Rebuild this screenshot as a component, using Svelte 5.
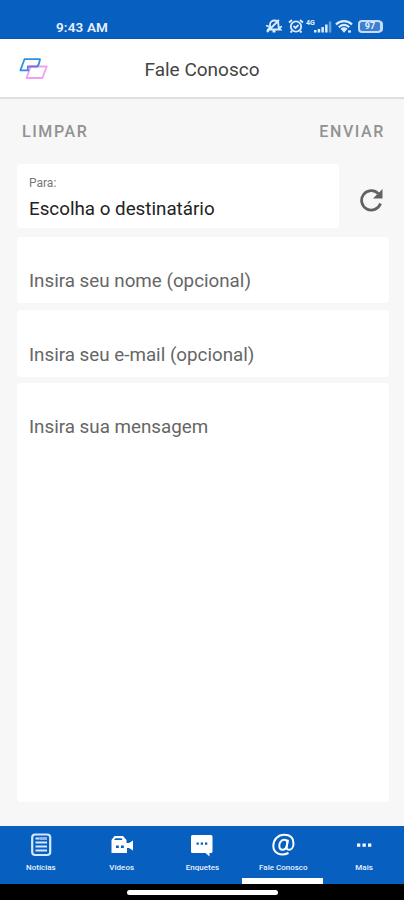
<script lang="ts">
	interface Tab {
		id: string;
		label: string;
	}

	const tabs: Tab[] = [
		{ id: 'news', label: 'Notícias' },
		{ id: 'videos', label: 'Vídeos' },
		{ id: 'polls', label: 'Enquetes' },
		{ id: 'contact', label: 'Fale Conosco' },
		{ id: 'more', label: 'Mais' }
	];

	let activeTab = $state('contact');
	let name = $state('');
	let email = $state('');
	let message = $state('');

	function clearForm() {
		name = '';
		email = '';
		message = '';
	}
</script>

<div class="screen">
	<div class="status-bar">
		<span class="clock">9:43 AM</span>
		<div class="status-icons">
			<svg width="18" height="16" viewBox="0 0 18 16" fill="none" stroke="#dcecff" stroke-width="1.8">
				<path d="M3 11.500 5 9V6.500C5 4 7 2.500 9.500 2.500S13.500 4.500 13.500 7v2l2 2.500zM7.500 13.500h3M2 14 14 2M13 10l4-1.500M1 7.500l3 1" />
			</svg>
			<svg width="16" height="16" viewBox="0 0 16 16" fill="none" stroke="#dcecff" stroke-width="1.8">
				<circle cx="8" cy="8.500" r="5.200" />
				<path d="M1 4.500 4 2M15 4.500 12 2M5.500 8l2 2 3-3M4 13l-1.500 1.500M12 13l1.500 1.500" />
			</svg>
			<div class="signal">
				<span>4G</span>
				<svg width="23" height="16" viewBox="0 0 23 16" fill="#dcecff">
					<path d="M4 12h2.500v2.500H4zM7.700 11h2.500v3.500H7.700zM11.400 9h2.500v5.500h-2.500zM15.100 6.500h2.500v8h-2.500z" />
					<path d="M18.800 3.500h2.500v11h-2.500z" opacity=".45" />
				</svg>
			</div>
			<svg class="wifi" width="18" height="16" viewBox="0 0 18 16" fill="none" stroke="#dcecff" stroke-width="2.200">
				<path d="M1 6.500C5.500 2 12.500 2 17 6.500M3.800 9.200c3-3 7.400-3 10.400 0" />
				<path d="m5.500 10.800 3.500 4 3.500-4c-2-2-5-2-7 0z" fill="#dcecff" stroke="none" />
				<path d="M13 13.500h3" />
			</svg>
			<div class="battery"><span>97</span></div>
		</div>
	</div>

	<header>
		<svg class="logo" width="30" height="22" viewBox="0 0 30 22" fill="none" stroke-width="1.800" stroke-linejoin="round">
			<path d="M11.500 8.500h16.300l-4.500 11.500H7.500l3-8z" stroke="#f0a0ee" />
			<path d="M10 12.300H1.400L5.500 1.200h15.500L20 5.500l-1.500 3" stroke="#2f8fdf" />
			<path d="M8.800 12.300V8.500h10" stroke="#7471dc" />
		</svg>
		<h1>Fale Conosco</h1>
	</header>

	<main>
		<div class="actions">
			<button type="button" onclick={clearForm}>LIMPAR</button>
			<button type="button">ENVIAR</button>
		</div>

		<div class="recipient-row">
			<div class="recipient">
				<span class="recipient-label">Para:</span>
				<span class="recipient-value">Escolha o destinatário</span>
			</div>
			<button type="button" class="refresh" aria-label="Atualizar">
				<svg width="24" height="24" viewBox="0 0 24 24" fill="none" stroke="#626262" stroke-width="2.800">
					<path d="M21.500 15.500A9.700 9.700 0 1 1 19.300 5.600" />
					<path d="M23.500 1v9.500H14z" fill="#626262" stroke="none" />
				</svg>
			</button>
		</div>

		<input bind:value={name} placeholder="Insira seu nome (opcional)" />
		<input class="email" bind:value={email} placeholder="Insira seu e-mail (opcional)" />
		<textarea bind:value={message} placeholder="Insira sua mensagem"></textarea>
	</main>

	<nav>
		{#each tabs as tab (tab.id)}
			<button type="button" class:active={activeTab === tab.id} onclick={() => (activeTab = tab.id)}>
				{#if tab.id === 'news'}
					<svg width="26" height="26" viewBox="0 0 26 26" fill="none" stroke="#d7e7ff" stroke-width="1.800">
						<rect x="4.200" y="2.500" width="18" height="20.500" rx="3" stroke-width="2.200" />
						<path d="M7.500 6.500h4M7.500 10.500h11.500M7.500 14.500h11.500M7.500 18.500h11.500" />
						<path d="M11.500 6.500H19" stroke="#8fb5e6" stroke-width="3" />
					</svg>
				{:else if tab.id === 'videos'}
					<svg width="26" height="26" viewBox="0 0 26 26" fill="#fff">
						<path d="M2.500 8 5.500 4H14L17.500 8v3H20l4-2.500v10L20 16h-2v5H2.500z" />
						<path d="M5 8 6.500 6.200h6L13.500 8zM7 13.500h2.800v2.500H7zM12 13.500h2.800v2.500H12z" fill="#075fc0" />
					</svg>
				{:else if tab.id === 'polls'}
					<svg width="26" height="26" viewBox="0 0 26 26" fill="#fff">
						<path d="M3.500 3H22A1.500 1.500 0 0 1 23.500 4.500v15A1.500 1.500 0 0 1 22 21h-1.500v3.500L16.500 21h-13A1.500 1.500 0 0 1 2 19.500v-15A1.500 1.500 0 0 1 3.500 3z" />
						<path d="M7.500 10.500h2.300v2.300H7.500zM11.700 10.500H14v2.300h-2.300zM16 10.500h2.300v2.300H16z" fill="#075fc0" />
					</svg>
				{:else if tab.id === 'contact'}
					<svg width="26" height="26" viewBox="0 0 26 26" fill="none" stroke="#fff" stroke-width="2">
						<path d="M18.500 21C11 24.500 3.300 21.500 3.300 13.800 3.300 7.500 8 2.800 14.200 2.800s9.300 3.500 9.300 8.700c0 4.200-2.300 6.300-4.500 6.300-2.500 0-2.700-1.800-2.200-4.200l1.200-5.800" />
						<path d="M17.300 10.500c0-1.800-1.300-2.700-3-2.700-3 0-5 2.900-5 5.900 0 2.300 1.300 4 3.200 4 2.400 0 4-2 4.500-4.500z" />
					</svg>
				{:else}
					<svg width="26" height="26" viewBox="0 0 26 26" fill="#fff">
						<path d="M6 11.500h3.300v3.300H6zM11.500 11.500h3.300v3.300h-3.300zM17 11.500h3.300v3.300H17z" />
					</svg>
				{/if}
				<span>{tab.label}</span>
			</button>
		{/each}
	</nav>

	<div class="gesture-bar">
		<div class="gesture-pill"></div>
	</div>
</div>

<style>
	:global(body) {
		margin: 0;
	}

	.screen {
		display: flex;
		flex-direction: column;
		width: 404px;
		height: 900px;
		overflow: hidden;
		background-color: #f7f7f7;
		font-family: Roboto, 'Liberation Sans', sans-serif;
	}

	button,
	input,
	textarea {
		display: block;
		box-sizing: border-box;
		margin: 0;
		border: none;
		outline: none;
		font-family: inherit;
	}

	button {
		padding: 0;
		background: none;
		cursor: pointer;
	}

	.status-bar {
		display: flex;
		justify-content: space-between;
		box-sizing: border-box;
		height: 39px;
		padding: 18px 20px 0 56px;
		background-color: #075fc0;
		border-bottom: 1px solid #0553b8;
		color: #e6f1ff;
	}

	.clock {
		font-size: 13.5px;
		font-weight: 600;
		line-height: 18px;
		letter-spacing: 0.15px;
	}

	.status-icons {
		display: flex;
		align-items: flex-start;
	}

	.status-icons > svg:nth-child(2) {
		margin-left: 5px;
	}

	.signal {
		display: flex;
		margin-left: 2px;
	}

	.signal span {
		width: 7px;
		font-size: 7px;
		font-weight: 700;
		line-height: 10px;
	}

	.signal svg {
		margin-left: -3px;
	}

	.wifi {
		margin-left: 2px;
	}

	.battery {
		display: flex;
		box-sizing: border-box;
		width: 24px;
		height: 13px;
		margin: 2px 2px 0 5px;
		border: 2px solid #c5dcf8;
		border-radius: 4px;
		background-color: #3d80d0;
		box-shadow: 2px 0 0 -1px #c5dcf8;
	}

	.battery span {
		flex: 1;
		text-align: center;
		font-size: 9px;
		font-weight: 700;
		line-height: 9px;
	}

	header {
		display: grid;
		grid-template-columns: 50px 1fr 50px;
		align-items: center;
		box-sizing: border-box;
		height: 60px;
		background-color: #fff;
		border-bottom: 2px solid #dedede;
	}

	.logo {
		margin: 1px 0 0 19px;
	}

	h1 {
		margin: 2px 0 0;
		text-align: center;
		color: #444;
		font-size: 19px;
		font-weight: 400;
	}

	main {
		flex: 1;
		padding: 0 15px 0 17px;
	}

	.actions {
		display: flex;
		justify-content: space-between;
		height: 65px;
		padding: 0 4px 0 5px;
	}

	.actions button {
		height: 64px;
		color: #929292;
		font-size: 16px;
		font-weight: 500;
		letter-spacing: 1.6px;
	}

	.recipient-row {
		display: flex;
		height: 64px;
		margin-bottom: 9px;
	}

	.recipient {
		display: flex;
		flex-direction: column;
		box-sizing: border-box;
		width: 322px;
		padding: 11px 12px 0;
		border-radius: 4px;
		background-color: #fff;
	}

	.recipient-label {
		color: #777;
		font-size: 12px;
		line-height: 16px;
	}

	.recipient-value {
		margin-top: 6px;
		color: #222;
		font-size: 18.8px;
		line-height: 24px;
	}

	.refresh {
		width: 24px;
		height: 24px;
		margin: 24px 0 0 20px;
	}

	input,
	textarea {
		width: 372px;
		padding: 22px 12px 0;
		border-radius: 4px;
		background-color: #fff;
		color: #222;
		font-size: 18.8px;
	}

	input {
		height: 66px;
		margin-bottom: 7px;
	}

	.email {
		height: 67px;
		margin-bottom: 6px;
	}

	textarea {
		height: 419px;
		padding-top: 33px;
		line-height: 23px;
		resize: none;
	}

	input::placeholder,
	textarea::placeholder {
		color: #666;
		opacity: 1;
	}

	nav {
		display: flex;
		height: 58px;
		background-color: #075fc0;
	}

	nav button {
		display: flex;
		flex: 1;
		flex-direction: column;
		align-items: center;
		padding: 6px 0 0 1px;
		color: #eaf3ff;
	}

	nav button span {
		margin-top: 4px;
		font-size: 8px;
		font-weight: 500;
		line-height: 12px;
		white-space: nowrap;
	}

	nav svg {
		width: 26px;
		height: 26px;
		flex: none;
	}

	nav .active {
		border-bottom: 6px solid #fff;
	}

	.gesture-bar {
		display: flex;
		justify-content: center;
		height: 16px;
		background-color: #000;
	}

	.gesture-pill {
		width: 151px;
		height: 5px;
		margin-top: 6px;
		border-radius: 3px;
		background-color: #fff;
	}
</style>
